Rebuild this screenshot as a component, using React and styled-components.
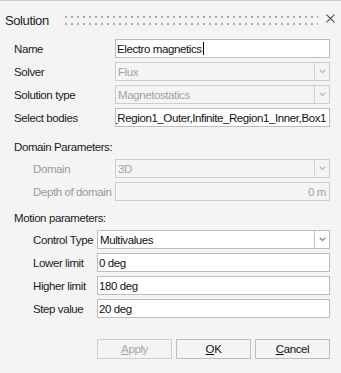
import React from "react";
import styled, { createGlobalStyle } from "styled-components";

const Global = createGlobalStyle`
  html, body { margin: 0; padding: 0; background: #f4f4f4; }
  body { font-family: "Liberation Sans", Arial, sans-serif; }
`;

const Dialog = styled.div`
  width: 341px;
  height: 373px;
  box-sizing: border-box;
  border-top: 1px solid #c9c9c9;
  background: #f4f4f4;
  display: flex;
  flex-direction: column;
  font-size: 11.5px;
  letter-spacing: -0.4px;
  color: #1b1b1b;
`;

const TitleBar = styled.div`
  display: flex;
  align-items: center;
  height: 24px;
  padding: 7px 6px 0 5px;
`;

const Title = styled.div`
  flex: 0 0 60px;
  font-size: 13px;
  color: #222;
`;

const Grip = styled.div`
  width: 254px;
  height: 9px;
  background-image: conic-gradient(at 2px 2px, transparent 75%, #a8a8a8 0);
  background-size: 6px 7px;
`;

const Close = styled.svg`
  margin-left: 8px;
  margin-bottom: 4px;
  width: 9px;
  height: 9px;
`;

const Form = styled.div`
  display: flex;
  flex-direction: column;
  padding: 7px 11px 0 14px;
`;

const Group = styled.div`
  display: flex;
  flex-direction: column;
  gap: 4px;
`;

const Row = styled.div`
  display: grid;
  grid-template-columns: ${(p) => p.$label}px 1fr;
  align-items: center;
  height: 19px;
  padding-left: ${(p) => p.$indent || 0}px;
`;

const Label = styled.div`
  color: ${(p) => (p.$disabled ? "#9a9a9a" : "#1b1b1b")};
  white-space: nowrap;
`;

const Section = styled.div`
  line-height: 14px;
  margin: ${(p) => p.$top}px 0 5px;
`;

const Field = styled.div`
  height: 19px;
  box-sizing: border-box;
  border: 1px solid ${(p) => (p.$disabled ? "#cdcdcd" : "#bcbcbc")};
  background: ${(p) => (p.$disabled ? "#f4f4f4" : "#ffffff")};
  color: ${(p) => (p.$disabled ? "#a3a3a3" : "#111")};
  display: flex;
  align-items: center;
  justify-content: ${(p) => (p.$right ? "flex-end" : "flex-start")};
  padding: 0 ${(p) => (p.$right ? 3 : 1)}px 0 1px;
  overflow: hidden;
  white-space: nowrap;
`;

const Caret = styled.span`
  display: inline-block;
  width: 1px;
  height: 13px;
  background: #000;
  margin-left: 1px;
`;

const Combo = styled.div`
  height: 19px;
  box-sizing: border-box;
  border: 1px solid ${(p) => (p.$disabled ? "#cdcdcd" : "#bcbcbc")};
  background: ${(p) => (p.$disabled ? "#f4f4f4" : "#ffffff")};
  color: ${(p) => (p.$disabled ? "#a3a3a3" : "#111")};
  display: flex;
  align-items: stretch;
`;

const ComboText = styled.div`
  flex: 1;
  display: flex;
  align-items: center;
  padding-left: 2px;
  white-space: nowrap;
  overflow: hidden;
`;

const ArrowCell = styled.div`
  width: 14px;
  border-left: 1px solid ${(p) => (p.$disabled ? "#d2d2d2" : "#c4c4c4")};
  display: flex;
  align-items: center;
  justify-content: center;
`;

const Buttons = styled.div`
  display: flex;
  justify-content: flex-end;
  gap: 4px;
  margin-top: 21px;
`;

const Button = styled.button`
  width: 75px;
  height: 20px;
  box-sizing: border-box;
  border: 1px solid ${(p) => (p.$disabled ? "#cfcfcf" : "#bdbdbd")};
  background: #f4f4f4;
  color: ${(p) => (p.$disabled ? "#a6a6a6" : "#111")};
  font-family: "Liberation Sans", Arial, sans-serif;
  font-size: 11.5px;
  letter-spacing: -0.4px;
  padding: 0;
  u { text-underline-offset: 1px; }
`;

const Chevron = ({ disabled }) => (
  <svg width="7" height="5" viewBox="0 0 7 5">
    <polyline
      points="0.7,0.7 3.5,3.6 6.3,0.7"
      fill="none"
      stroke={disabled ? "#bdbdbd" : "#8c8c8c"}
      strokeWidth="1.4"
    />
  </svg>
);

const ComboBox = ({ value, disabled }) => (
  <Combo $disabled={disabled}>
    <ComboText>{value}</ComboText>
    <ArrowCell $disabled={disabled}>
      <Chevron disabled={disabled} />
    </ArrowCell>
  </Combo>
);

export default function App() {
  return (
    <>
      <Global />
      <Dialog>
        <TitleBar>
          <Title>Solution</Title>
          <Grip />
          <Close viewBox="0 0 9 9">
            <path d="M0.5 0.5 L8.5 8.5 M8.5 0.5 L0.5 8.5" stroke="#4a4a4a" strokeWidth="1.1" />
          </Close>
        </TitleBar>
        <Form>
          <Group>
            <Row $label={101}>
              <Label>Name</Label>
              <Field>
                Electro magnetics
                <Caret />
              </Field>
            </Row>
            <Row $label={101}>
              <Label>Solver</Label>
              <ComboBox value="Flux" disabled />
            </Row>
            <Row $label={101}>
              <Label>Solution type</Label>
              <ComboBox value="Magnetostatics" disabled />
            </Row>
            <Row $label={101}>
              <Label>Select bodies</Label>
              <Field $right>Infinite_Region1_Outer,Infinite_Region1_Inner,Box1</Field>
            </Row>
          </Group>

          <Section $top={13}>Domain Parameters:</Section>
          <Group>
            <Row $label={82} $indent={19}>
              <Label $disabled>Domain</Label>
              <ComboBox value="3D" disabled />
            </Row>
            <Row $label={82} $indent={19}>
              <Label $disabled>Depth of domain</Label>
              <Field $disabled $right>0 m</Field>
            </Row>
          </Group>

          <Section $top={10}>Motion parameters:</Section>
          <Group>
            <Row $label={64} $indent={19}>
              <Label>Control Type</Label>
              <ComboBox value="Multivalues" />
            </Row>
            <Row $label={64} $indent={19}>
              <Label>Lower limit</Label>
              <Field>0 deg</Field>
            </Row>
            <Row $label={64} $indent={19}>
              <Label>Higher limit</Label>
              <Field>180 deg</Field>
            </Row>
            <Row $label={64} $indent={19}>
              <Label>Step value</Label>
              <Field>20 deg</Field>
            </Row>
          </Group>

          <Buttons>
            <Button $disabled disabled>
              <u>A</u>pply
            </Button>
            <Button>
              <u>O</u>K
            </Button>
            <Button>
              <u>C</u>ancel
            </Button>
          </Buttons>
        </Form>
      </Dialog>
    </>
  );
}
